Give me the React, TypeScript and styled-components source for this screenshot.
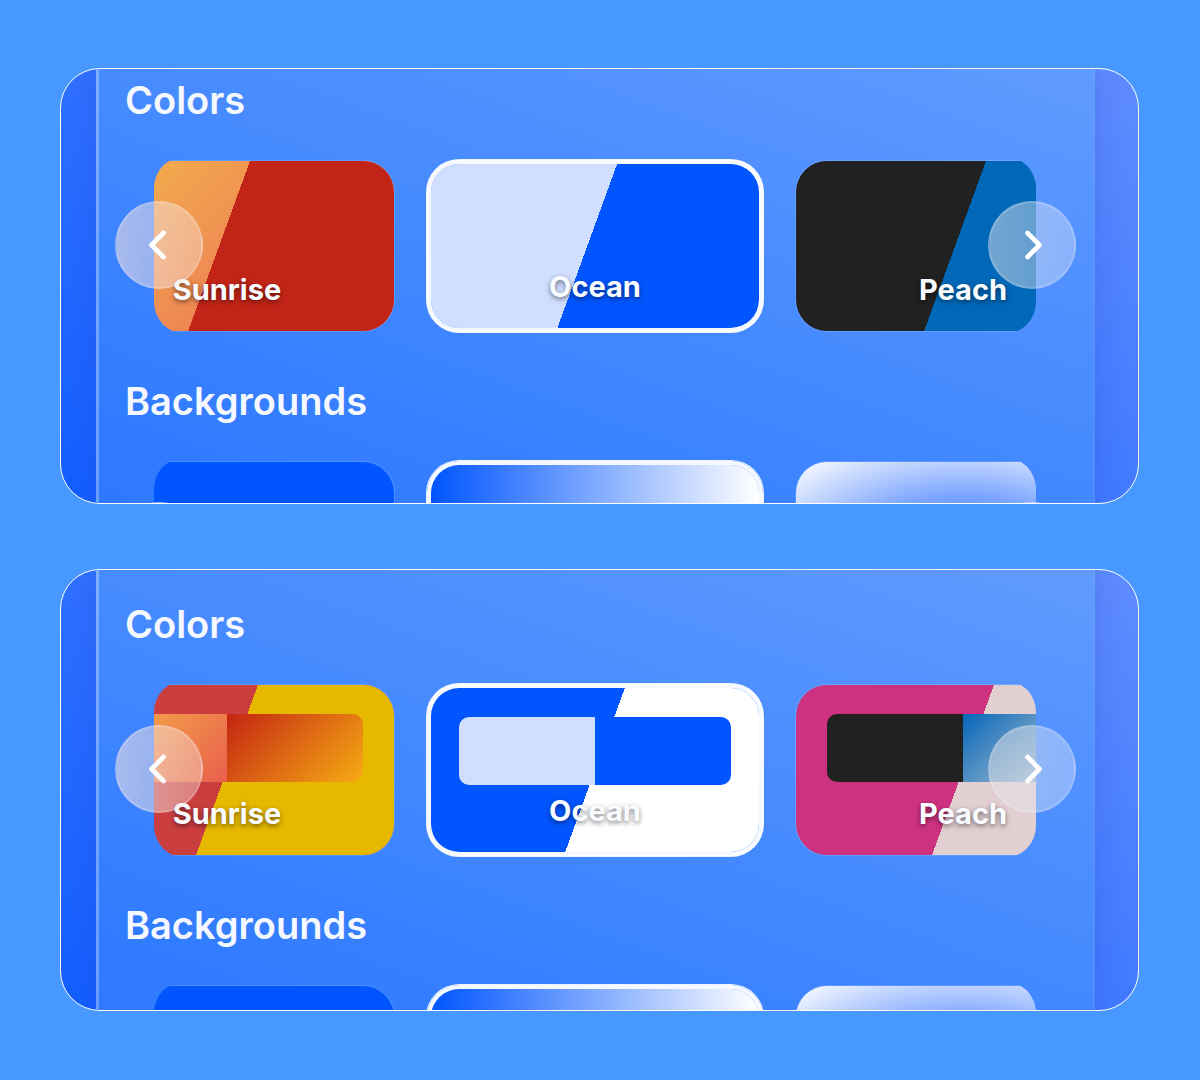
import React from "react";
import styled, { createGlobalStyle } from "styled-components";

const GlobalStyle = createGlobalStyle`
  *, *::before, *::after { box-sizing: border-box; }
  body {
    margin: 0;
    min-height: 100vh;
    background: #4899ff;
    font-family: Inter, "Liberation Sans", sans-serif;
  }
`;

const Page = styled.main`
  display: flex;
  flex-direction: column;
  gap: 65px;
  padding: 68px 61px 68px 60px;
`;

const Frame = styled.section<{ $height: number }>`
  height: ${(p) => p.$height}px;
  padding: 0 43px 0 35px;
  border: 1px solid #ffffff;
  border-radius: 40px;
  overflow: hidden;
  background: linear-gradient(213deg, #5f8cff 0%, #135eff 100%);
`;

const Panel = styled.div<{ $top: number }>`
  display: flex;
  flex-direction: column;
  gap: 43px;
  padding: ${(p) => p.$top}px 25px 31px 24px;
  border-left: 3px solid rgba(255, 255, 255, 0.2);
  border-right: 2px solid rgba(255, 255, 255, 0.16);
  background: linear-gradient(200deg, #609bff 0%, #4c8eff 30%, #307bff 75%, #2a74ff 100%);
  box-shadow: 0 0 28px rgba(30, 50, 180, 0.2);
`;

const Group = styled.section`
  display: flex;
  flex-direction: column;
  gap: 32px;
`;

const Title = styled.h2`
  margin: 0;
  padding-left: 2px;
  color: #f5f9ff;
  font-size: 38px;
  font-weight: 600;
  line-height: 48px;
`;

const Carousel = styled.div`
  position: relative;
`;

const Track = styled.div`
  display: flex;
  justify-content: center;
  gap: 32px;
  margin: 0 32px 0 31px;
  padding: 4px 0 2px;
  border-radius: 32px;
  overflow: hidden;
`;

const Card = styled.button<{ $paint: string; $active: boolean }>`
  flex: 0 0 336px;
  height: 172px;
  display: flex;
  flex-direction: column;
  align-items: center;
  padding: 29px 0 23px;
  border: ${(p) =>
    p.$active ? "4px solid rgba(255, 255, 255, 0.95)" : "1px solid rgba(255, 255, 255, 0.14)"};
  border-radius: 32px;
  box-shadow: ${(p) => (p.$active ? "0 0 0 1px rgba(255, 255, 255, 0.9)" : "none")};
  background: ${(p) => p.$paint};
  background-clip: padding-box;
  font: inherit;
  cursor: pointer;
`;

const Swatch = styled.span`
  display: flex;
  width: 272px;
  height: 68px;
  border-radius: 10px;
  overflow: hidden;
`;

const SwatchHalf = styled.span<{ $paint: string }>`
  flex: 1;
  background: ${(p) => p.$paint};
`;

const CardLabel = styled.span`
  margin-top: auto;
  color: #f8fbff;
  font-size: 29px;
  font-weight: 700;
  line-height: 36px;
  text-shadow: 0 2px 5px rgba(0, 0, 0, 0.5);
`;

const Arrow = styled.button<{ $side: "left" | "right" }>`
  position: absolute;
  top: calc(50% - 44px);
  ${(p) => p.$side}: -8px;
  width: 88px;
  height: 88px;
  display: grid;
  place-items: center;
  padding: 0;
  border: 2px solid rgba(255, 255, 255, 0.16);
  border-radius: 50%;
  background: ${(p) =>
    p.$side === "left"
      ? "linear-gradient(90deg, rgba(240, 224, 226, 0.6), rgba(245, 226, 218, 0.4))"
      : "linear-gradient(90deg, rgba(228, 228, 232, 0.5), rgba(228, 232, 250, 0.38))"};
  cursor: pointer;
`;

const Chevron = styled.svg`
  display: block;
  width: 32px;
  height: 32px;
  fill: none;
  stroke: #ffffff;
  stroke-width: 4.6;
  stroke-linecap: round;
  stroke-linejoin: round;
`;

interface Option {
  name: string;
  paint: string;
  swatch?: [string, string];
}

const split = (left: string, right: string, at: number) =>
  `linear-gradient(110deg, transparent ${at}%, ${right} ${at}%), ${left}`;

const solidColors: Option[] = [
  { name: "Sunrise", paint: split("linear-gradient(135deg, #f5bc4a, #e9605a)", "#c22517", 48) },
  { name: "Ocean", paint: split("#d0deff", "#0055ff", 48) },
  { name: "Peach", paint: split("#212121", "#0068b8", 48) },
];

const swatchColors: Option[] = [
  {
    name: "Sunrise",
    paint: split("#cb3e40", "#e6b800", 50),
    swatch: [
      "linear-gradient(135deg, #f7b548, #e85f4c)",
      "linear-gradient(135deg, #c42512, #f6ac14)",
    ],
  },
  { name: "Ocean", paint: split("#0055ff", "#ffffff", 50), swatch: ["#d0deff", "#0055ff"] },
  {
    name: "Peach",
    paint: split("#cd3280", "#e1cfd2", 50),
    swatch: ["#212121", "linear-gradient(135deg, #0566b8, #e8e0d8)"],
  },
];

const backgrounds: Option[] = [
  { name: "Solid", paint: "#0055ff" },
  { name: "Linear", paint: "linear-gradient(90deg, #0055ff, #ffffff)" },
  { name: "Radial", paint: "radial-gradient(#1a62ff, #ffffff)" },
];

interface PickerProps {
  title: string;
  options: Option[];
  labelled?: boolean;
}

function Picker({ title, options, labelled = false }: PickerProps) {
  return (
    <Group>
      <Title>{title}</Title>
      <Carousel>
        <Track>
          {options.map((option, i) => (
            <Card
              key={option.name}
              type="button"
              $paint={option.paint}
              $active={i === 1}
              aria-pressed={i === 1}
              aria-label={option.name}
            >
              {option.swatch && (
                <Swatch>
                  <SwatchHalf $paint={option.swatch[0]} />
                  <SwatchHalf $paint={option.swatch[1]} />
                </Swatch>
              )}
              {labelled && <CardLabel>{option.name}</CardLabel>}
            </Card>
          ))}
        </Track>
        <Arrow type="button" $side="left" aria-label="Previous">
          <Chevron viewBox="0 0 32 32">
            <path d="M20.500 4 8.500 16 20.500 28" />
          </Chevron>
        </Arrow>
        <Arrow type="button" $side="right" aria-label="Next">
          <Chevron viewBox="0 0 32 32">
            <path d="M11.500 4 23.500 16 11.500 28" />
          </Chevron>
        </Arrow>
      </Carousel>
    </Group>
  );
}

export default function App() {
  return (
    <>
      <GlobalStyle />
      <Page>
        <Frame $height={436}>
          <Panel $top={7}>
            <Picker title="Colors" options={solidColors} labelled />
            <Picker title="Backgrounds" options={backgrounds} />
          </Panel>
        </Frame>
        <Frame $height={442}>
          <Panel $top={30}>
            <Picker title="Colors" options={swatchColors} labelled />
            <Picker title="Backgrounds" options={backgrounds} />
          </Panel>
        </Frame>
      </Page>
    </>
  );
}
